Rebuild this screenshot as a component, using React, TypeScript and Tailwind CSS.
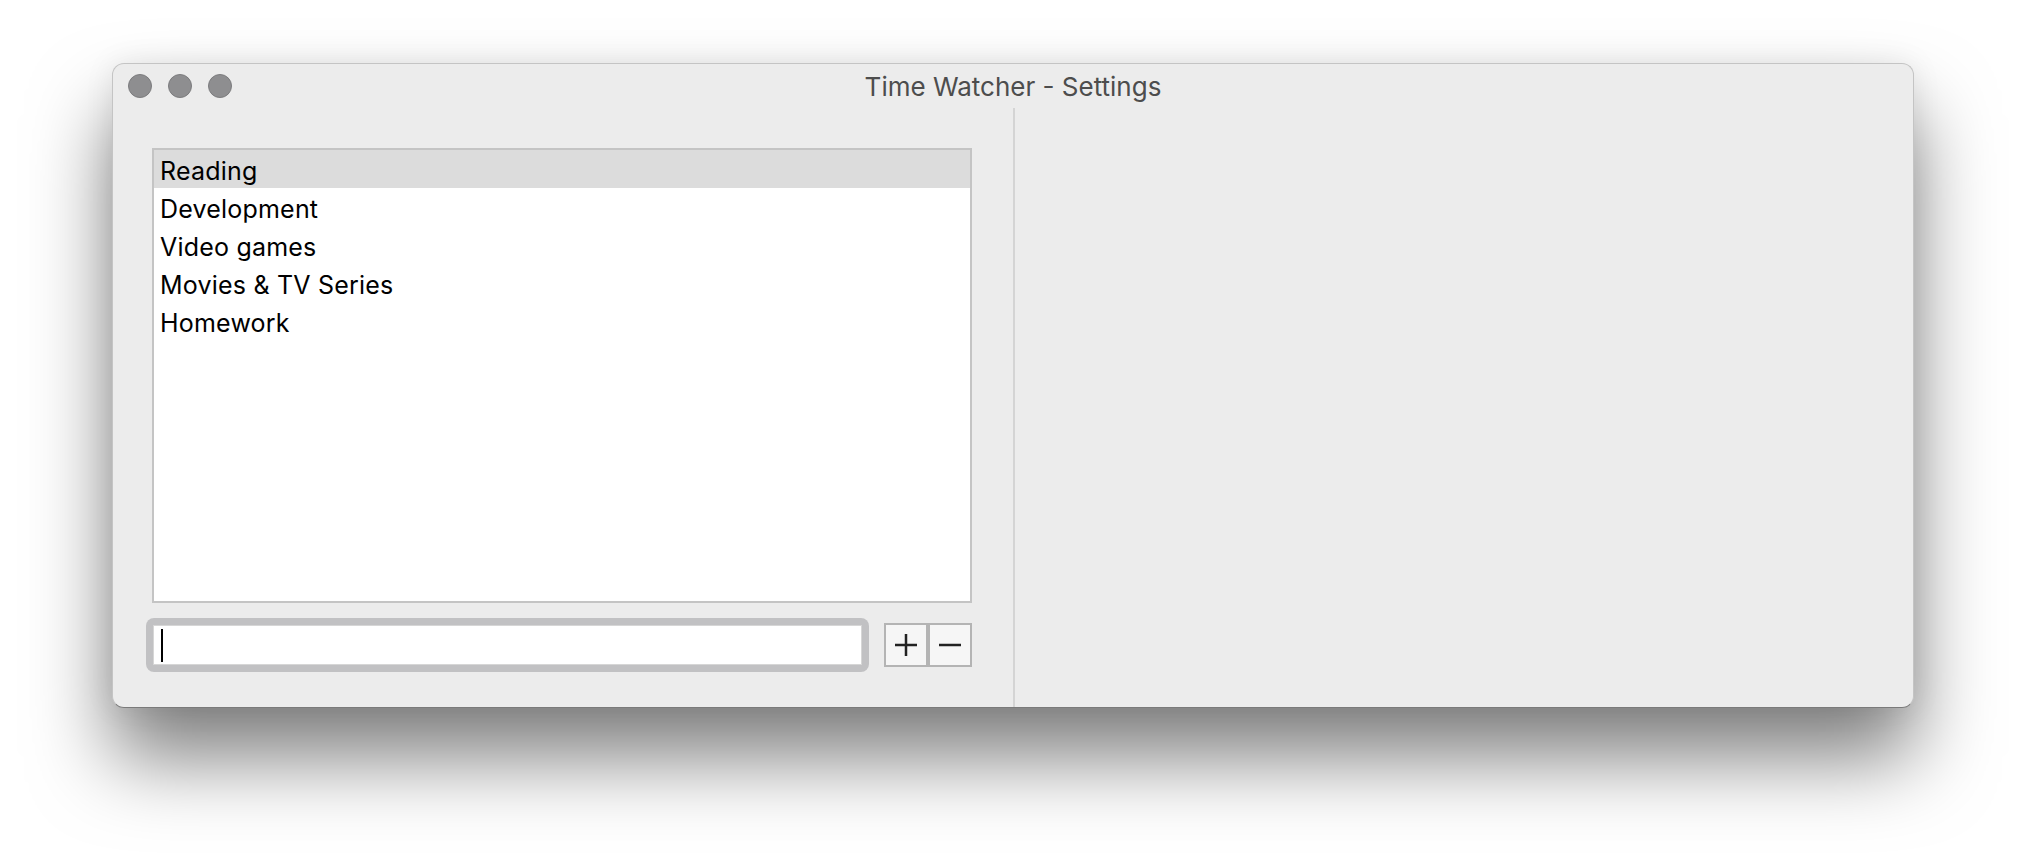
const categories = ["Reading", "Development", "Video games", "Movies & TV Series", "Homework"]

function TrafficLight() {
  return <div className="w-[24px] h-[24px] rounded-full bg-[#8e8e90] border border-[#7c7c7e]" />
}

export default function App() {
  return (
    <div className="min-h-[868px] w-[2026px] bg-white pl-[112px] pt-[63px] font-['Inter','Liberation_Sans',sans-serif]">
      <div className="flex h-[645px] w-[1802px] flex-col rounded-[12px] border border-[#c4c4c4] border-b-[#7a7a7a] bg-[#ececec] shadow-[0_50px_80px_rgba(0,0,0,0.5),0_0_30px_rgba(0,0,0,0.08)]">
        {/* title bar */}
        <div className="relative flex h-[44px] shrink-0 items-center pl-[15px]">
          <div className="flex gap-[16px]">
            <TrafficLight />
            <TrafficLight />
            <TrafficLight />
          </div>
          <div className="absolute inset-x-0 top-[7px] text-center text-[26px] leading-[32px] text-[#4d4d4d]">
            Time Watcher - Settings
          </div>
        </div>

        <div className="flex flex-1">
          {/* left pane */}
          <div className="w-[900px] pl-[39px] pr-[39px] pt-[40px]">
            <div className="h-[455px] w-[820px] border-2 border-[#c4c4c4] bg-white">
              {categories.map((c, i) => (
                <div
                  key={c}
                  className={`h-[38px] pl-[6px] text-[25px] leading-[42px] tracking-[0.2px] text-black ${i === 0 ? "bg-[#dcdcdc]" : ""}`}
                >
                  {c}
                </div>
              ))}
            </div>

            <div className="mt-[15px] flex items-center">
              <div className="-ml-[6px] rounded-[8px] bg-[#c1c1c3] p-[7px]">
                <div className="flex h-[40px] w-[709px] items-center border border-[#d6d6d6] bg-white pl-[7px]">
                  <div className="h-[33px] w-[2px] bg-black" />
                </div>
              </div>
              <div className="ml-[15px] flex">
                <button className="flex h-[44px] w-[44px] items-center justify-center border-2 border-[#b4b4b4] bg-[#f6f6f6]">
                  <svg width="22" height="22" viewBox="0 0 22 22">
                    <path d="M0 11H22M11 0V22" stroke="#222" strokeWidth="2.5" />
                  </svg>
                </button>
                <button className="flex h-[44px] w-[44px] items-center justify-center border-2 border-[#b4b4b4] bg-[#f6f6f6]">
                  <svg width="22" height="22" viewBox="0 0 22 22">
                    <path d="M0 11H22" stroke="#222" strokeWidth="2.5" />
                  </svg>
                </button>
              </div>
            </div>
          </div>

          {/* divider */}
          <div className="w-[2px] bg-[#d4d4d4]" />

          {/* right pane */}
          <div className="flex-1" />
        </div>
      </div>
    </div>
  )
}
